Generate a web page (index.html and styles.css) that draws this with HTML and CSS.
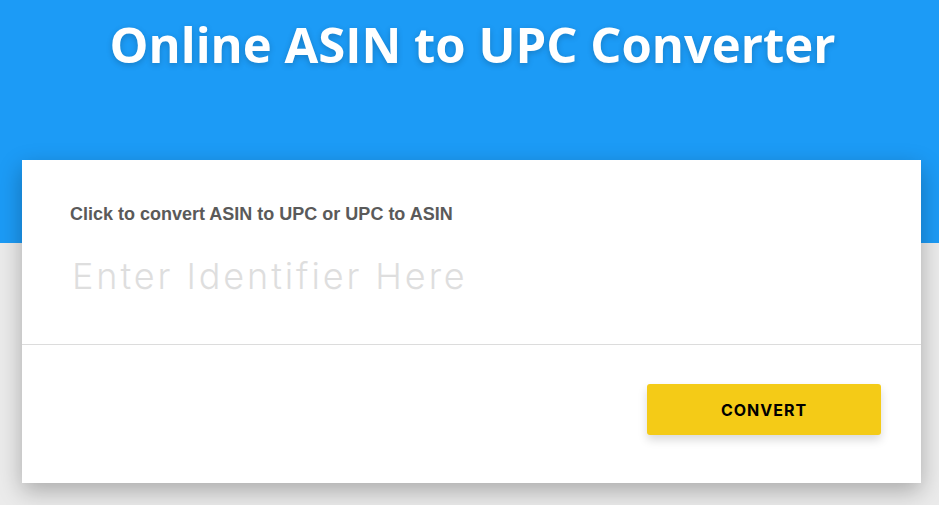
FILE: index.html
```html
<!DOCTYPE html>
<html lang="en">
<head>
  <meta charset="UTF-8">
  <meta name="viewport" content="width=device-width, initial-scale=1.0">
  <title>Online ASIN to UPC Converter</title>
  <link rel="stylesheet" href="styles.css">
</head>
<body>
  <header class="hero">
    <h1>Online ASIN to UPC Converter</h1>
  </header>

  <main class="converter">
    <form class="converter-card" id="convertForm">
      <div class="field">
        <label for="identifier">Click to convert ASIN to UPC or UPC to ASIN</label>
        <input type="text" id="identifier" name="identifier" placeholder="Enter Identifier Here">
      </div>
      <div class="actions">
        <button type="submit">CONVERT</button>
      </div>
    </form>
  </main>
</body>
</html>
```

FILE: styles.css
```css
body {
  margin: 0;
  background-color: #ebebeb;
  font-family: "Open Sans", Arial, sans-serif;
}
.hero {
  background-color: #1c9bf6;
  height: 243px;
  text-align: center;
}
.hero h1 {
  margin: 0;
  padding: 12px 0 0 6px;
  color: #fff;
  font-size: 49px;
  font-weight: 700;
  line-height: 64px;
  text-shadow: 0 2px 6px rgba(0, 0, 0, 0.2);
}
.converter {
  margin: -83px 18px 0 22px;
  padding-bottom: 40px;
}
.converter-card {
  background-color: #fff;
  box-shadow: 0 8px 22px rgba(0, 0, 0, 0.28);
}
.field {
  padding: 44px 48px 0;
  height: 140px;
  border-bottom: 1px solid #dcdcdc;
}
label {
  display: block;
  font-family: "Liberation Sans", Arial, sans-serif;
  font-weight: 700;
  font-size: 18px;
  line-height: 21px;
  color: #5a5a5a;
}
input[type="text"] {
  display: block;
  width: 100%;
  height: 44px;
  margin-top: 29px;
  padding: 0 0 0 2px;
  border: none;
  outline: none;
  font-family: "Inter", "Open Sans", sans-serif;
  font-weight: 300;
  font-size: 36px;
  line-height: 44px;
  letter-spacing: 2.9px;
  color: #333;
  box-sizing: border-box;
}
input::placeholder {
  color: #dedede;
}
.actions {
  display: flex;
  justify-content: flex-end;
  padding: 39px 40px 48px;
}
button {
  width: 234px;
  height: 51px;
  background-color: #f4cb17;
  color: #000;
  border: none;
  border-radius: 3px;
  box-shadow: 0 5px 10px rgba(0, 0, 0, 0.15);
  font-family: "Inter", "Open Sans", sans-serif;
  font-weight: 700;
  font-size: 16px;
  letter-spacing: 1px;
  cursor: pointer;
}
```
